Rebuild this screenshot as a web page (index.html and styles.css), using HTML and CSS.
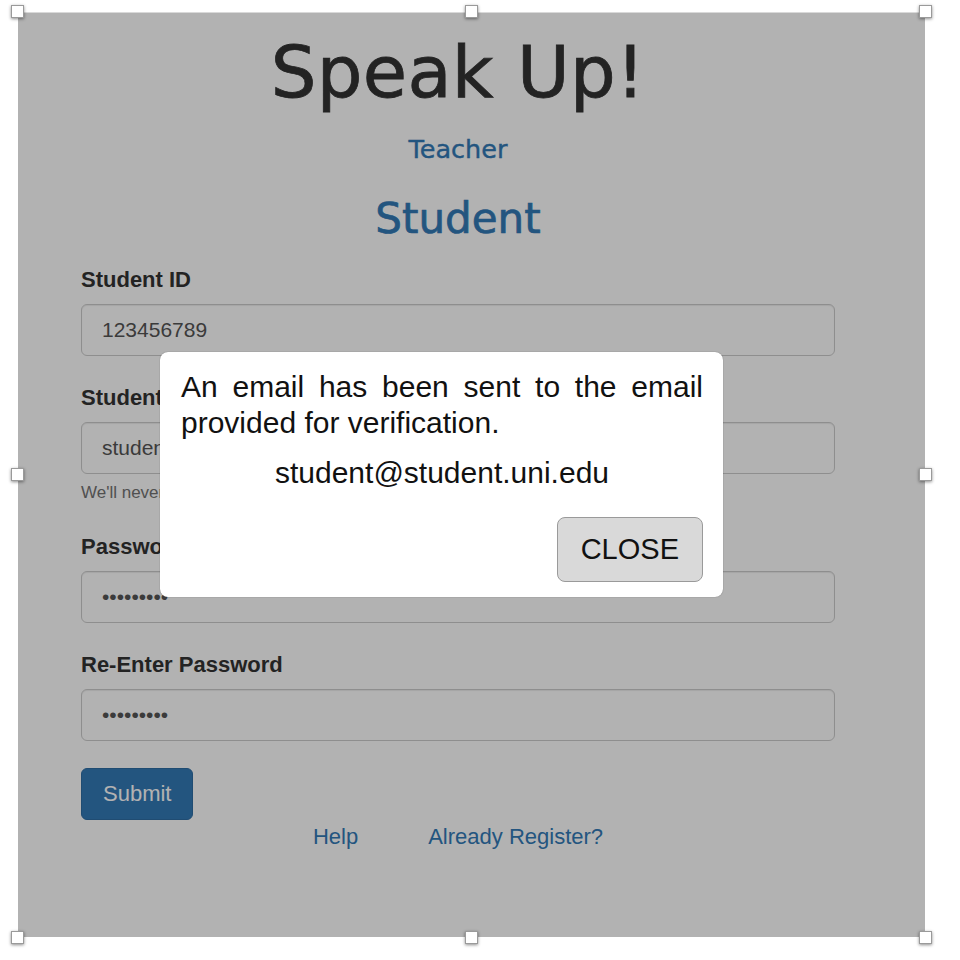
FILE: index.html
```html
<!DOCTYPE html>
<html lang="en">
<head>
<meta charset="utf-8">
<title>Speak Up!</title>
<link rel="stylesheet" href="styles.css">
</head>
<body>
<div class="frame">
  <div class="page">
    <h1 class="title">Speak Up!</h1>
    <a class="role-link" href="#">Teacher</a>
    <h2 class="role">Student</h2>
    <form class="form">
      <div class="group">
        <label class="label">Student ID</label>
        <input class="field" type="text" value="123456789">
      </div>
      <div class="group">
        <label class="label">Student Email</label>
        <input class="field" type="text" value="student@student.uni.edu">
        <p class="help">We'll never share your email with anyone else.</p>
      </div>
      <div class="group">
        <label class="label">Password</label>
        <input class="field" type="password" value="password1">
      </div>
      <div class="group">
        <label class="label">Re-Enter Password</label>
        <input class="field" type="password" value="password1">
      </div>
      <button class="submit" type="button">Submit</button>
      <div class="links">
        <a href="#">Help</a>
        <a href="#">Already Register?</a>
      </div>
    </form>
  </div>
  <div class="scrim"></div>
  <div class="modal">
    <p class="modal-text">An email has been sent to the email provided for verification.</p>
    <p class="modal-email">student@student.uni.edu</p>
    <div class="modal-actions">
      <button class="close-btn" type="button">CLOSE</button>
    </div>
  </div>
  <span class="handle h-tl"></span>
  <span class="handle h-tc"></span>
  <span class="handle h-tr"></span>
  <span class="handle h-ml"></span>
  <span class="handle h-mr"></span>
  <span class="handle h-bl"></span>
  <span class="handle h-bc"></span>
  <span class="handle h-br"></span>
</div>
</body>
</html>
```
FILE: styles.css
```css
* { box-sizing: border-box; }

html, body {
  margin: 0;
  background: #ffffff;
}

body {
  min-height: 960px;
  font-family: "Liberation Sans", Arial, sans-serif;
  color: #333333;
}

.frame {
  position: relative;
  margin: 12px 0 0 18px;
  width: 907px;
  height: 925px;
  background: #ffffff;
  padding: 16px 90px 0 63px;
}

.page {
  width: 754px;
}

.title {
  margin: 0;
  font-family: "DejaVu Sans", "Liberation Sans", sans-serif;
  font-size: 72px;
  line-height: 88px;
  font-weight: normal;
  letter-spacing: 0.3px;
  text-align: center;
  color: #333333;
  -webkit-text-stroke: 0.8px #333333;
}

.role-link {
  display: block;
  margin-top: 17px;
  font-family: "DejaVu Sans", "Liberation Sans", sans-serif;
  font-size: 25.5px;
  line-height: 32px;
  text-align: center;
  color: #337ab7;
  text-decoration: none;
  -webkit-text-stroke: 0.4px #337ab7;
}

.role {
  margin: 28px 0 0;
  font-family: "DejaVu Sans", "Liberation Sans", sans-serif;
  font-size: 42px;
  line-height: 52px;
  font-weight: normal;
  text-align: center;
  color: #337ab7;
  -webkit-text-stroke: 0.7px #337ab7;
}

.form {
  margin-top: 20px;
}

.group {
  margin-bottom: 27px;
}

.label {
  display: block;
  margin-bottom: 9px;
  font-size: 22px;
  line-height: 30px;
  font-weight: bold;
  color: #333333;
}

.field {
  display: block;
  width: 100%;
  height: 52px;
  padding: 0 20px;
  font-family: "Liberation Sans", Arial, sans-serif;
  font-size: 21px;
  color: #555555;
  background: #ffffff;
  border: 1px solid #cccccc;
  border-radius: 6px;
  box-shadow: inset 0 1px 1px rgba(0, 0, 0, 0.075);
}

.help {
  margin: 7px 0 3px;
  font-size: 17px;
  line-height: 24px;
  color: #737373;
}

.submit {
  display: block;
  height: 52px;
  padding: 0 21px;
  font-family: "Liberation Sans", Arial, sans-serif;
  font-size: 22px;
  color: #ffffff;
  background: #337ab7;
  border: 1px solid #2e6da4;
  border-radius: 6px;
}

.links {
  display: flex;
  justify-content: center;
  gap: 70px;
  margin-top: 4px;
  font-size: 22px;
  line-height: 26px;
}

.links a {
  color: #337ab7;
  text-decoration: none;
}

.scrim {
  position: absolute;
  inset: 0;
  background: rgba(0, 0, 0, 0.3);
  border-top: 1px solid rgba(255, 255, 255, 0.5);
}

.modal {
  position: absolute;
  left: 142px;
  top: 340px;
  width: 563px;
  padding: 17px 20px 15px 21px;
  background: #ffffff;
  border-radius: 8px;
  box-shadow: 0 0 1px rgba(0, 0, 0, 0.5);
  color: #111111;
  font-size: 30px;
  line-height: 36px;
}

.modal-text {
  margin: 0;
  text-align: justify;
}

.modal-email {
  margin: 14px 0 0;
  text-align: center;
}

.modal-actions {
  display: flex;
  justify-content: flex-end;
  margin-top: 26px;
}

.close-btn {
  padding: 15px 23px;
  font-family: "Liberation Sans", Arial, sans-serif;
  font-size: 29px;
  line-height: 33px;
  color: #111111;
  background: #d9d9d9;
  border: 1px solid #9a9a9a;
  border-radius: 8px;
}

.handle {
  position: absolute;
  z-index: 2;
  width: 13px;
  height: 13px;
  background: #ffffff;
  border: 1px solid #9a9a9a;
  box-shadow: 0 1px 3px rgba(0, 0, 0, 0.45);
}

.h-tl { left: -7px; top: -7px; }
.h-tc { left: calc(50% - 7px); top: -7px; }
.h-tr { right: -7px; top: -7px; }
.h-ml { left: -7px; top: calc(50% - 7px); }
.h-mr { right: -7px; top: calc(50% - 7px); }
.h-bl { left: -7px; bottom: -7px; }
.h-bc { left: calc(50% - 7px); bottom: -7px; }
.h-br { right: -7px; bottom: -7px; }
```
